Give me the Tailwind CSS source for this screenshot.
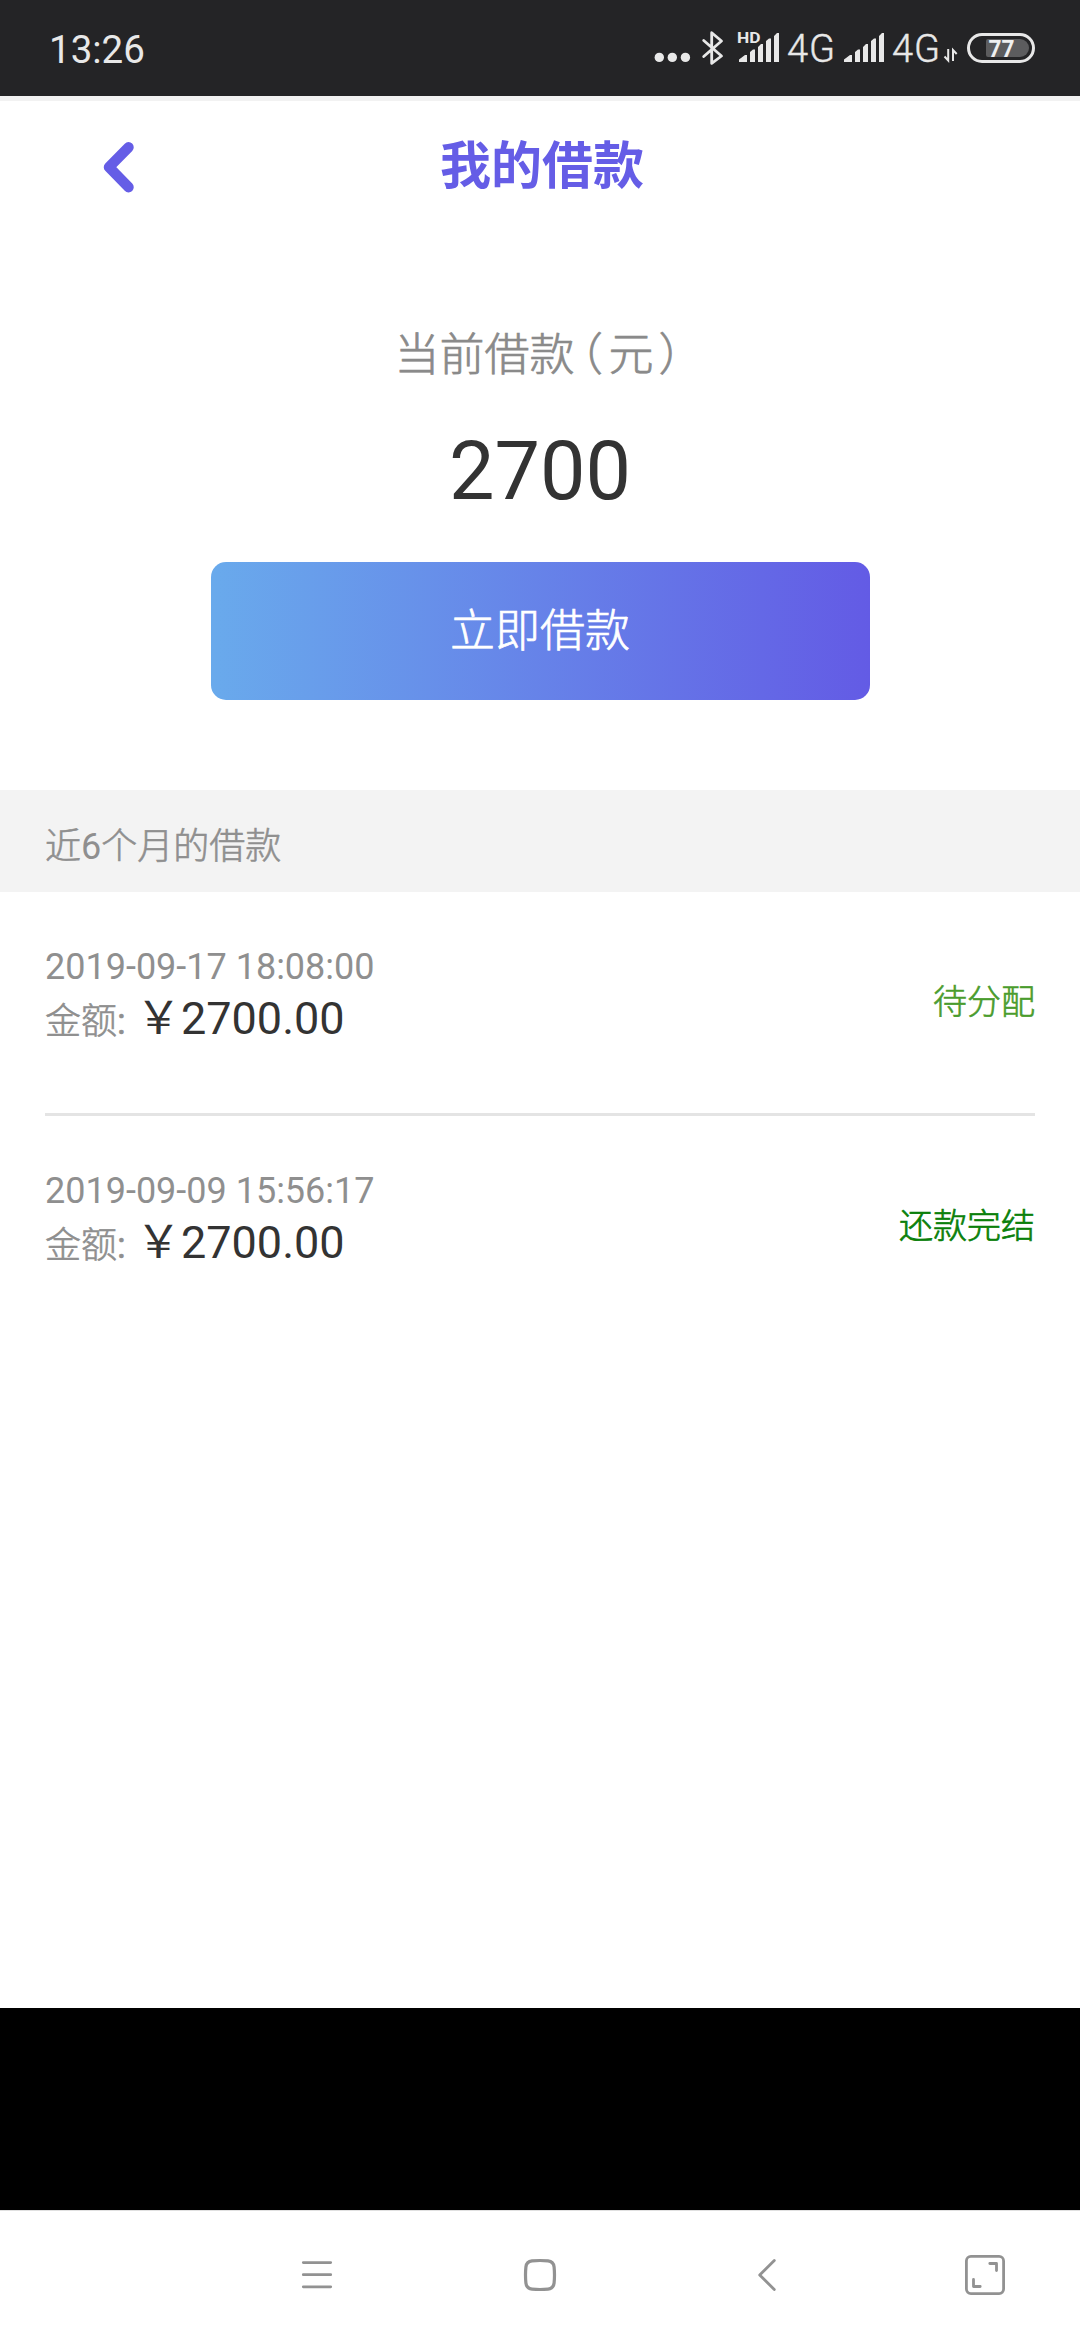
<!DOCTYPE html>
<html lang="zh-CN">
<head>
<meta charset="utf-8">
<title>我的借款</title>
<script src="https://cdn.jsdelivr.net/npm/@tailwindcss/browser@4"></script>
</head>
<body class="bg-white">
<div class="w-[1080px] h-[2340px] flex flex-col overflow-hidden bg-white font-['Roboto','Noto_Sans_CJK_SC',sans-serif] text-[#8f8f8f]">

  <!-- Status bar -->
  <div class="h-[96px] shrink-0 bg-[#242426] text-[#e8e8e8] flex pl-[49px]">
    <span class="w-[602px] text-[38.5px] leading-[100px]">13:26</span>
    <svg class="w-[82px] h-[96px] shrink-0" viewBox="651 0 82 96" fill="#e8e8e8">
      <circle cx="659.3" cy="57.4" r="4.7"/><circle cx="672.3" cy="57.4" r="4.7"/><circle cx="685.4" cy="57.4" r="4.7"/>
      <path d="M703.7 40.5 721.5 56 711.7 63.3V32.7L721.5 41 703.7 56.5" fill="none" stroke="#e8e8e8" stroke-width="2.8" stroke-linejoin="round" stroke-linecap="round"/>
    </svg>
    <svg class="w-[54px] h-[96px] shrink-0" viewBox="733 0 54 96" fill="#e8e8e8">
      <text x="737" y="43" font-size="15.5" font-weight="700" textLength="23.5" lengthAdjust="spacingAndGlyphs" font-family="Roboto">HD</text>
      <path d="M739 62V59.5L745 55H747V62ZM750 62V52L753 49.5H755V62ZM758 62V47L761 44H763V62ZM766 62V41L769 38.5H771V62ZM774 62V36L777 33H779V62Z"/>
    </svg>
    <span class="w-[53px] text-[38px] leading-[99px] font-light tracking-[0.8px] [-webkit-text-stroke:0.4px_currentColor]">4G</span>
    <svg class="w-[52px] h-[96px] shrink-0" viewBox="735 0 52 96" fill="#e8e8e8">
      <path d="M739 62V59.5L745 55H747V62ZM750 62V52L753 49.5H755V62ZM758 62V47L761 44H763V62ZM766 62V41L769 38.5H771V62ZM774 62V36L777 33H779V62Z"/>
    </svg>
    <span class="w-[49px] text-[38px] leading-[99px] font-light tracking-[0.8px] [-webkit-text-stroke:0.4px_currentColor]">4G</span>
    <svg class="w-[100px] h-[96px] shrink-0" viewBox="941 0 100 96">
      <path d="M948.2 49V60.5L944.5 56.5M953 61V50L956.7 54" fill="none" stroke="#e8e8e8" stroke-width="2"/>
      <rect x="968.5" y="34.5" width="65" height="27" rx="13.5" fill="none" stroke="#e8e8e8" stroke-width="3"/>
      <path d="M988 39H1020A9 9 0 0 1 1020 57H988A2 2 0 0 1 986 55V41A2 2 0 0 1 988 39Z" fill="#5c5c5e"/>
      <text x="988.5" y="56.7" font-size="24" font-weight="700" fill="#f0f0f0" textLength="26" lengthAdjust="spacingAndGlyphs" font-family="Roboto">77</text>
    </svg>
  </div>
  <div class="h-[5px] shrink-0 bg-[#f2f2f2]"></div>

  <!-- Title bar -->
  <header class="h-[131px] shrink-0 flex items-center pl-[99px] pr-[135px]">
    <svg class="w-[40px] h-[60px]" viewBox="99 137 40 60" fill="none" stroke="#655de6" stroke-width="10.5" stroke-linecap="round" stroke-linejoin="round"><path d="M128.5 147.3 109 167.2 128.5 187.2"/></svg>
    <h1 class="grow text-center text-[51px] leading-[130px] font-bold text-[#655de6]">我的借款</h1>
  </header>

  <!-- Current loan -->
  <section class="h-[558px] shrink-0 flex flex-col items-center pt-[94px]">
    <div class="text-[45px] leading-[60px] h-[60px] font-light text-[#8a8a8a] flex [-webkit-text-stroke:0.7px_currentColor]"><span>当前借款</span><span class="ml-[6px] w-[28px] [font-feature-settings:'halt']">（</span><span>元</span><span class="ml-[5px] w-[27px] [font-feature-settings:'halt']">）</span></div>
    <div class="h-[100px] mt-[36px] text-[81px] leading-[100px] text-[#333]">2700</div>
    <button class="mt-[40px] w-[659px] h-[138px] rounded-[15px] bg-[linear-gradient(90deg,#69aaec,#635be5)] text-white text-[45px] leading-[138px] pt-[1px] font-light [-webkit-text-stroke:0.7px_currentColor]">立即借款</button>
  </section>

  <!-- Loan history -->
  <h2 class="h-[102px] shrink-0 bg-[#f3f3f3] pl-[45px] pt-[6px] text-[36px] leading-[102px] font-light"><span class="[-webkit-text-stroke:0.6px_currentColor]">近</span><span class="font-normal">6</span><span class="[-webkit-text-stroke:0.6px_currentColor]">个月的借款</span></h2>
  <ul class="grow px-[45px]">
    <li class="h-[224px] flex justify-between pt-[48px] border-b-[3px] border-[#e4e4e4]">
      <div>
        <div class="text-[36px] leading-[54px]">2019-09-17 18:08:00</div>
        <div class="text-[45px] leading-[50px] text-[#333] flex"><span class="text-[36px] leading-[57px] w-[91px] font-light text-[#8f8f8f] [-webkit-text-stroke:0.6px_currentColor]">金额<b class="font-normal">:</b></span><span>￥2700.00</span></div>
      </div>
      <span class="mt-[37px] text-[34px] leading-[50px] font-light text-[#4a9c2d] [-webkit-text-stroke:0.6px_currentColor]">待分配</span>
    </li>
    <li class="h-[224px] flex justify-between pt-[48px]">
      <div>
        <div class="text-[36px] leading-[54px]">2019-09-09 15:56:17</div>
        <div class="text-[45px] leading-[50px] text-[#333] flex"><span class="text-[36px] leading-[57px] w-[91px] font-light text-[#8f8f8f] [-webkit-text-stroke:0.6px_currentColor]">金额<b class="font-normal">:</b></span><span>￥2700.00</span></div>
      </div>
      <span class="mt-[37px] text-[34px] leading-[50px] font-light text-[#0a800a] [-webkit-text-stroke:0.7px_currentColor]">还款完结</span>
    </li>
  </ul>

  <div class="h-[202px] shrink-0 bg-black"></div>

  <!-- Navigation bar -->
  <nav class="h-[130px] shrink-0 bg-white border-t border-[#e0e0e0] flex">
    <svg class="w-[1080px] h-[129px]" viewBox="0 2211 1080 129" fill="none" stroke="#929292" stroke-width="2.8" stroke-linecap="round" stroke-linejoin="round">
      <path d="M303.3 2262.6H330.7M303.3 2274.7H330.7M303.3 2286.8H330.7"/>
      <path d="M532 2260.9Q540 2260.1 548 2260.9Q553.5 2261.5 554.1 2267Q554.9 2275 554.1 2283Q553.5 2288.5 548 2289.1Q540 2289.9 532 2289.1Q526.5 2288.5 525.9 2283Q525.1 2275 525.9 2267Q526.5 2261.5 532 2260.9Z" stroke-width="3.2"/>
      <path d="M774.3 2260.5 759.7 2275 774.3 2289.5"/>
      <rect x="966.4" y="2256.4" width="37.2" height="37.2" rx="4.5"/>
      <path d="M989.8 2263.5H996.5V2270.5M973.5 2279.5V2286.5H980.2"/>
    </svg>
  </nav>
</div>
</body>
</html>
